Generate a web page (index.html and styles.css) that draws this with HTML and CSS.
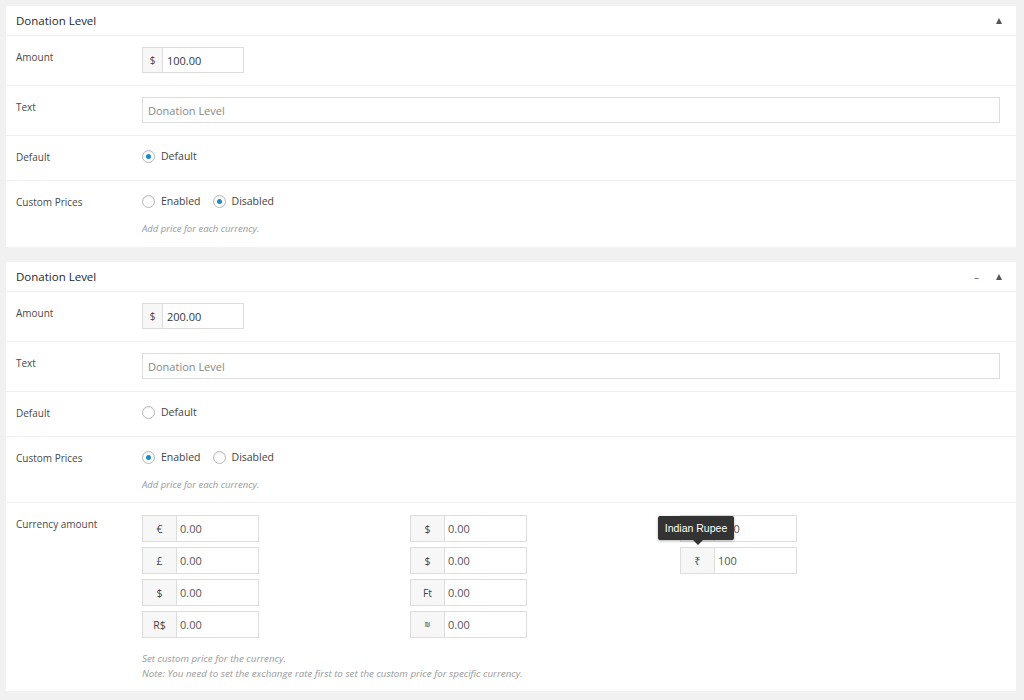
FILE: index.html
```html
<!DOCTYPE html>
<html>
<head>
<meta charset="utf-8">
<link rel="stylesheet" href="styles.css">
</head>
<body>
<div class="panel">
  <div class="panel-head"><span>Donation Level</span><span class="tools"><span class="arrow"></span></span></div>
  <div class="row row-input">
    <div class="label">Amount</div>
    <div class="field"><div class="group small"><span class="pre">$</span><span class="val">100.00</span></div></div>
  </div>
  <div class="row row-input">
    <div class="label">Text</div>
    <div class="field"><div class="text-input">Donation Level</div></div>
  </div>
  <div class="row row-radio">
    <div class="label">Default</div>
    <div class="field"><label class="radio"><span class="dot on"></span>Default</label></div>
  </div>
  <div class="row row-custom">
    <div class="label">Custom Prices</div>
    <div class="field">
      <div class="radios"><label class="radio"><span class="dot"></span>Enabled</label><label class="radio"><span class="dot on"></span>Disabled</label></div>
      <p class="desc">Add price for each currency.</p>
    </div>
  </div>
</div>

<div class="panel">
  <div class="panel-head"><span>Donation Level</span><span class="tools"><span class="minus">–</span><span class="arrow"></span></span></div>
  <div class="row row-input">
    <div class="label">Amount</div>
    <div class="field"><div class="group small"><span class="pre">$</span><span class="val">200.00</span></div></div>
  </div>
  <div class="row row-input">
    <div class="label">Text</div>
    <div class="field"><div class="text-input">Donation Level</div></div>
  </div>
  <div class="row row-radio">
    <div class="label">Default</div>
    <div class="field"><label class="radio"><span class="dot"></span>Default</label></div>
  </div>
  <div class="row row-custom">
    <div class="label">Custom Prices</div>
    <div class="field">
      <div class="radios"><label class="radio"><span class="dot on"></span>Enabled</label><label class="radio"><span class="dot"></span>Disabled</label></div>
      <p class="desc">Add price for each currency.</p>
    </div>
  </div>
  <div class="row row-currency">
    <div class="label">Currency amount</div>
    <div class="field">
      <div class="cur-grid">
        <div class="col">
          <div class="group cur"><span class="pre">€</span><span class="val">0.00</span></div>
          <div class="group cur"><span class="pre">£</span><span class="val">0.00</span></div>
          <div class="group cur"><span class="pre">$</span><span class="val">0.00</span></div>
          <div class="group cur"><span class="pre">R$</span><span class="val">0.00</span></div>
        </div>
        <div class="col">
          <div class="group cur"><span class="pre">$</span><span class="val">0.00</span></div>
          <div class="group cur"><span class="pre">$</span><span class="val">0.00</span></div>
          <div class="group cur"><span class="pre">Ft</span><span class="val">0.00</span></div>
          <div class="group cur"><span class="pre tiny">₪</span><span class="val">0.00</span></div>
        </div>
        <div class="col">
          <div class="tip-wrap">
            <div class="group cur"><span class="pre">¥</span><span class="val">0.00</span></div>
            <div class="tooltip">Indian Rupee</div>
          </div>
          <div class="group cur"><span class="pre">₹</span><span class="val">100</span></div>
        </div>
      </div>
      <p class="desc notes">Set custom price for the currency.<br>Note: You need to set the exchange rate first to set the custom price for specific currency.</p>
    </div>
  </div>
</div>
</body>
</html>
```

FILE: styles.css
```css
* { box-sizing: border-box; }
body {
  margin: 0;
  padding: 6px 8px 0 6px;
  background: #f1f1f1;
  font-family: "Open Sans", "Noto Sans", sans-serif;
  color: #444;
  height: 700px;
  overflow: hidden;
}
.panel {
  background: #fff;
  width: 1010px;
  margin-bottom: 15px;
}
.panel-head {
  height: 30px;
  border-bottom: 1px solid #eeeeee;
  display: flex;
  align-items: center;
  justify-content: space-between;
  padding: 0 14px 0 10px;
  font-size: 11.5px;
  color: #23282d;
}
.tools { display: flex; align-items: center; gap: 17px; }
.arrow {
  width: 0; height: 0;
  border-left: 3.5px solid transparent;
  border-right: 3.5px solid transparent;
  border-bottom: 6px solid #555;
}
.minus { font-size: 10px; color: #666; line-height: 1; }
.row {
  display: flex;
  border-bottom: 1px solid #f0f0f0;
  padding: 0 10px;
}
.row:last-child { border-bottom: none; }
.label {
  width: 126px;
  flex: none;
  font-size: 10px;
  color: #4a4a4a;
}
.field { flex: 1; }
.row-input { height: 50px; padding-top: 11px; }
.row-input .label { padding-top: 3px; }
.row-radio { height: 45px; padding-top: 13px; }
.row-radio .label { padding-top: 1px; }
.row-custom { height: 66px; padding-top: 13px; }
.row-custom .label { padding-top: 1px; }
.row-currency { height: 188px; padding-top: 12px; }
.row-currency .label { padding-top: 2px; }

.group {
  display: flex;
  border: 1px solid #ddd;
  height: 26px;
  font-size: 11px;
  color: #32373c;
}
.group.small { width: 102px; }
.pre {
  width: 20px;
  background: #f7f7f7;
  border-right: 1px solid #ddd;
  display: flex;
  align-items: center;
  justify-content: center;
  color: #444;
  font-size: 10px;
}
.val {
  display: flex;
  align-items: center;
  padding-left: 4px;
}
.text-input {
  height: 26px;
  width: 858px;
  border: 1px solid #ddd;
  display: flex;
  align-items: center;
  padding-left: 5px;
  font-size: 11px;
  color: #888;
}
.radios { display: flex; gap: 12px; }
.radio {
  display: flex;
  align-items: center;
  font-size: 10.5px;
  color: #444;
}
.dot {
  width: 13px; height: 13px;
  border: 1px solid #b4b9be;
  border-radius: 50%;
  margin-right: 6px;
  display: flex;
  align-items: center;
  justify-content: center;
  box-shadow: inset 0 1px 2px rgba(0,0,0,0.08);
}
.dot.on::after {
  content: "";
  width: 5px; height: 5px;
  border-radius: 50%;
  background: #1e8cbe;
}
.desc {
  margin: 14px 0 0;
  font-size: 9.5px;
  font-style: italic;
  color: #999;
}
.cur-grid {
  display: grid;
  grid-template-columns: 268px 270px 1fr;
}
.col { display: flex; flex-direction: column; gap: 5px; }
.group.cur { width: 117px; height: 27px; }
.group.cur .pre { width: 34px; font-size: 10.5px; }
.group.cur .pre.tiny { font-size: 7px; }
.group.cur .val { padding-left: 3px; color: #555; }
.tip-wrap { position: relative; }
.tooltip {
  position: absolute;
  left: -22px;
  top: 1px;
  width: 76px;
  height: 24px;
  background: #333;
  color: #fff;
  font-family: "Liberation Sans", Arial, sans-serif;
  font-size: 10.5px;
  display: flex;
  align-items: center;
  justify-content: center;
  border-radius: 2px;
  box-shadow: 0 1px 3px rgba(0,0,0,0.3);
}
.tooltip::after {
  content: "";
  position: absolute;
  left: 35px;
  bottom: -5px;
  border-left: 5px solid transparent;
  border-right: 5px solid transparent;
  border-top: 5px solid #333;
}
.notes { margin-top: 13px; line-height: 15px; font-size: 9.75px; }
```
